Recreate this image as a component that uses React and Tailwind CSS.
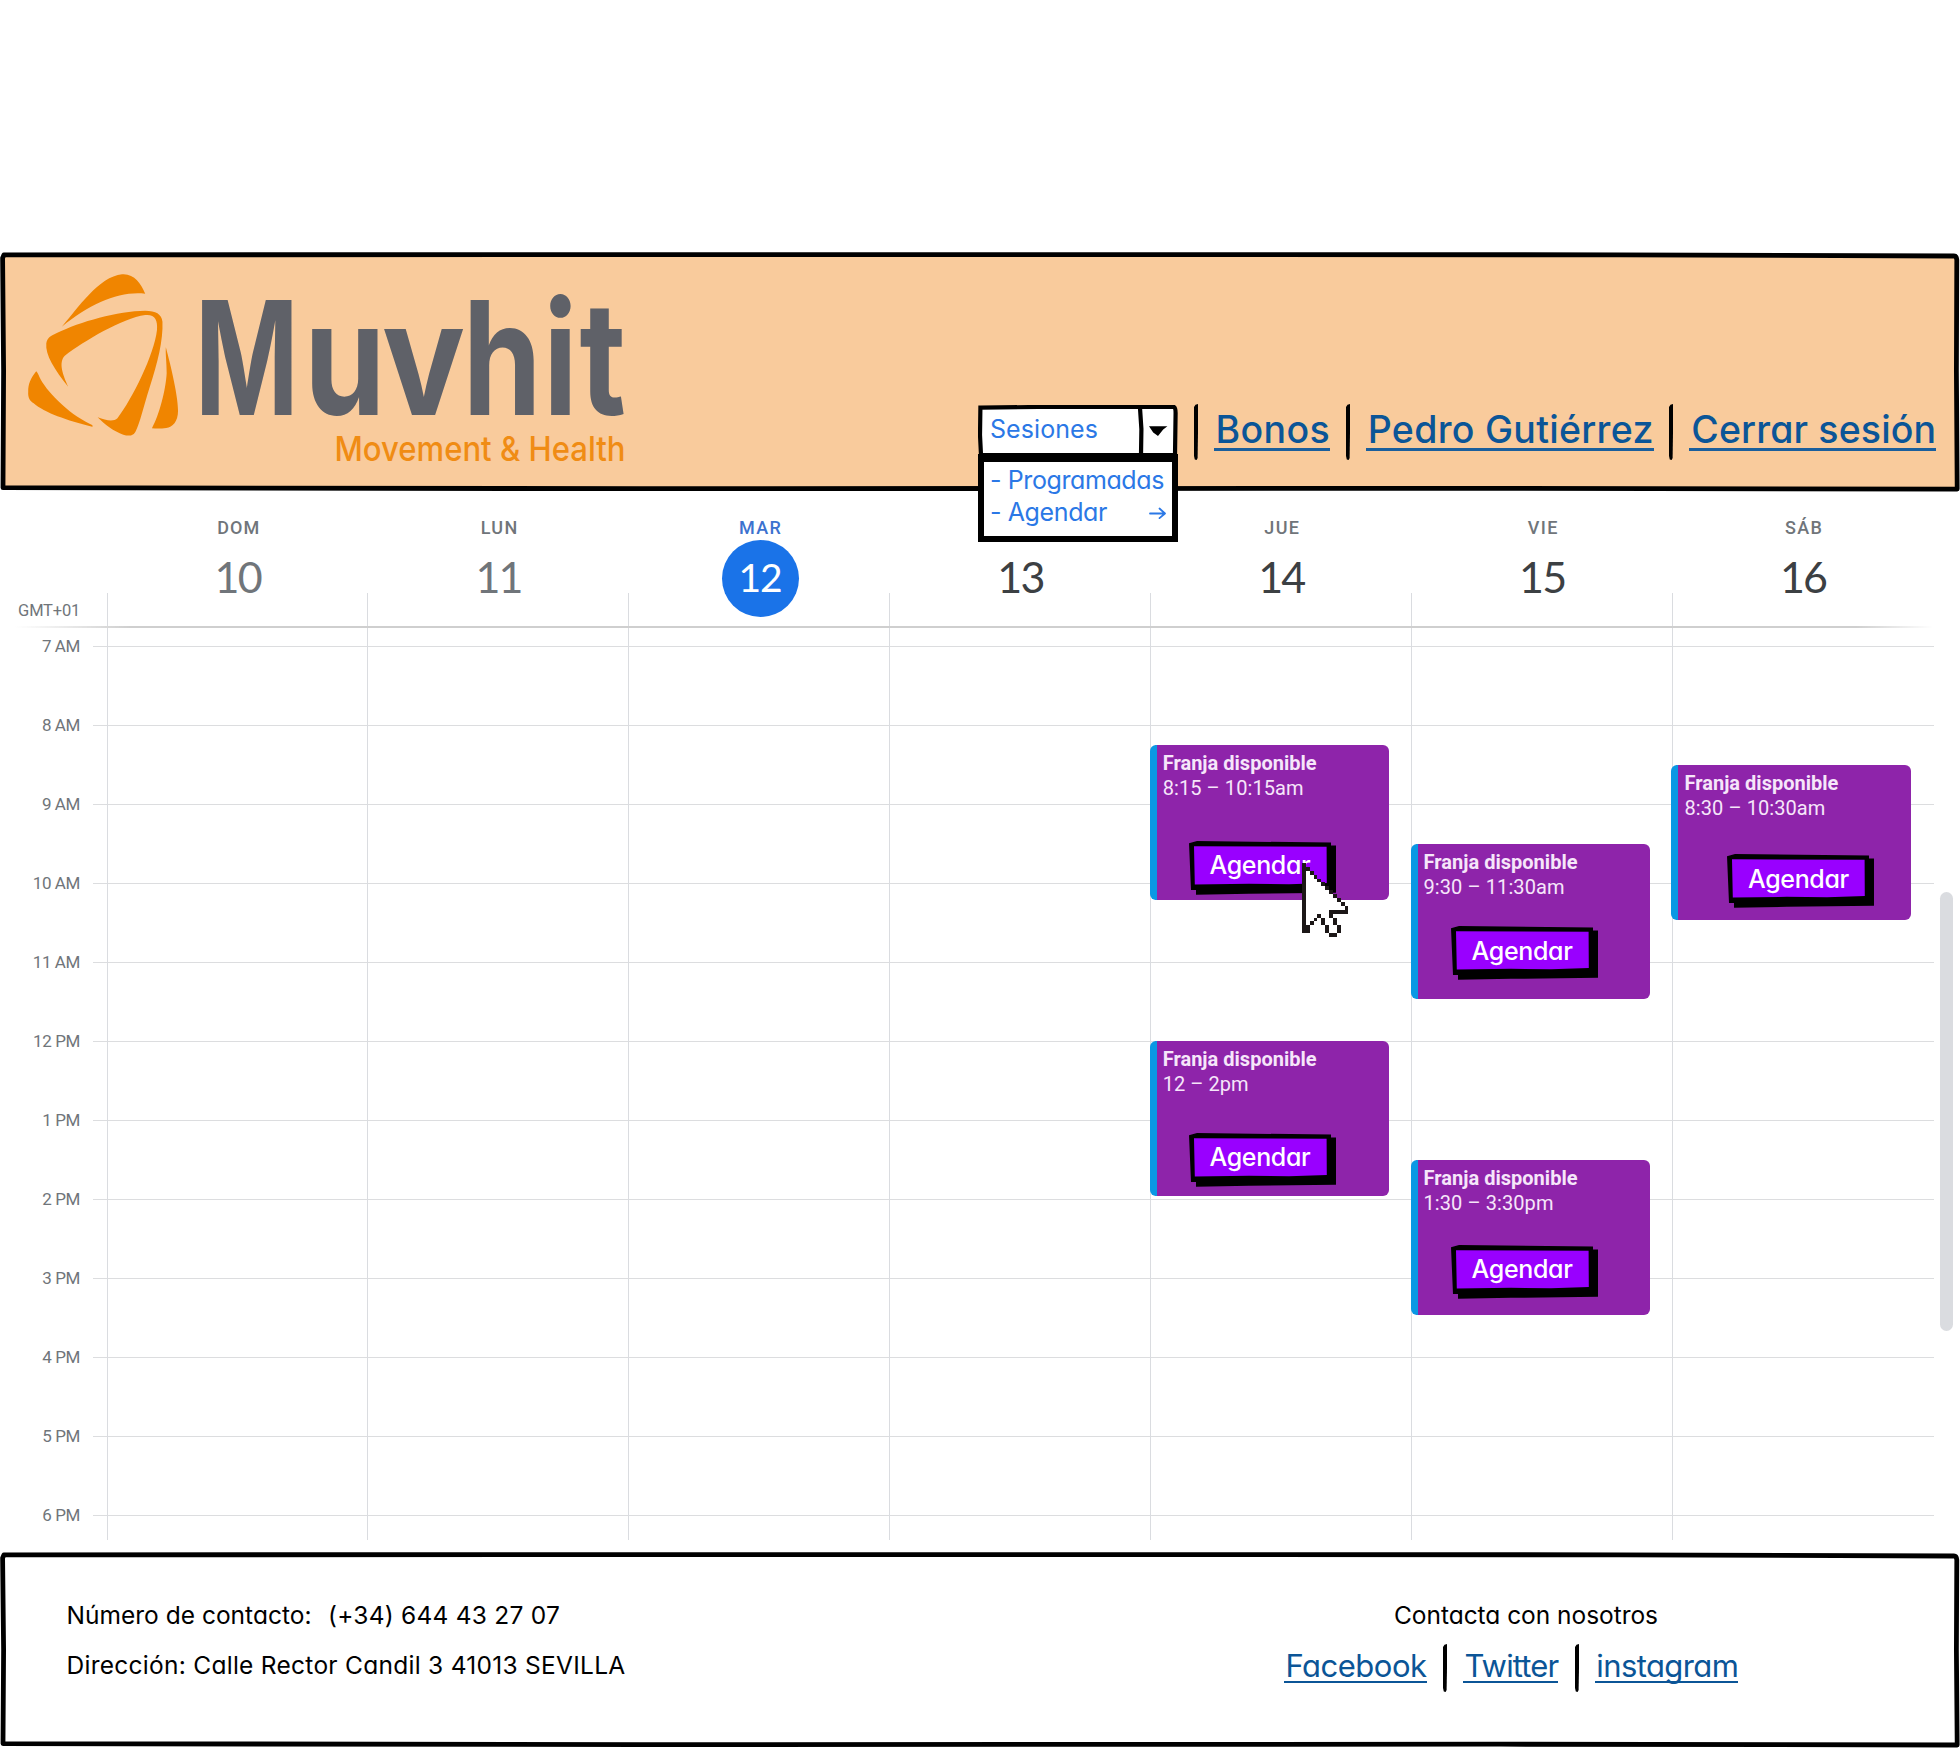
import React, { useLayoutEffect, useRef, useState } from 'react';

const HAND = "font-[Inter,'Noto_Sans',sans-serif] [font-feature-settings:'cv11'_1]";

/* Single line of text whose tracking is adjusted to fill a given width. */
function Fit({ w, className = '', children }) {
  const ref = useRef(null);
  const [ls, setLs] = useState(0);
  useLayoutEffect(() => {
    const el = ref.current;
    const natural = el.getBoundingClientRect().width;
    const n = el.textContent.length;
    setLs((w - natural) / n);
  }, [w]);
  return (
    <span className={'block shrink-0 whitespace-pre ' + className} style={{ width: w }}>
      <span ref={ref} className="inline-block" style={{ letterSpacing: ls }}>
        {children}
      </span>
    </span>
  );
}

function Frame({ h, b, fill }) {
  return (
    <svg className="absolute inset-0 overflow-visible" width="1960" height={h} viewBox={`0 0 1960 ${h}`} aria-hidden="true">
      <path
        d={`M4 2.8 L1200 2.6 L1620 2.8 L1954 4 Q1956.5 4 1956.8 8 L1956.4 ${h / 2} L1957.2 ${b + 0.4} L1500 ${b - 0.4} L640 ${b} L3 ${b - 1} L3.6 ${h / 2} L2.6 6 Z`}
        fill={fill}
        stroke="#000"
        strokeWidth="4.8"
        strokeLinejoin="round"
      />
    </svg>
  );
}

function Logo() {
  return (
    <svg className="absolute left-0 top-0" width="632" height="238" viewBox="0 252 632 238" aria-label="Muvhit">
      <g transform="translate(0 240) scale(0.42088 0.33333)" fill="#f08500">
        <path d="M147 260C185 205 235 110 290 103C318 100 335 130 345 161C285 152 215 190 147 260Z" />
        <path
          fillRule="evenodd"
          d="M162 440C130 390 107 345 110 310C113 292 118 290 135 279C190 245 280 213 345 212C370 212 384 222 386 245C388 300 374 370 356 440C341 500 332 550 323 572C317 590 305 588 293 584C270 574 250 555 232 532C252 542 270 546 279 535C315 475 366 345 373 270C375 240 368 222 345 225C290 235 200 303 154 347C138 368 150 405 162 440Z"
        />
        <path d="M86 394C72 417 67 432 67 455C66 475 72 483 80 490C105 518 160 542 219 560C222 559 220 555 214 552C160 520 108 450 94 412C91 402 88 396 86 394Z" />
        <path d="M394 322C400 350 423 460 423 512C423 545 410 561 395 564C384 566 372 566 361 565C378 525 394 450 396 400C396 365 393 345 394 322Z" />
      </g>
      <g transform="scale(0.8 1)" fill="#5f6168" fontFamily="Inter, sans-serif" fontWeight="700" fontSize="158">
        <text y="414.7">
          <tspan x="243.5" textLength="130" lengthAdjust="spacingAndGlyphs">M</tspan>
          <tspan x="380" textLength="102" lengthAdjust="spacingAndGlyphs">u</tspan>
          <tspan x="477.5" textLength="104" lengthAdjust="spacingAndGlyphs">v</tspan>
          <tspan x="578.5">h</tspan>
          <tspan x="679">i</tspan>
          <tspan x="724.5">t</tspan>
        </text>
      </g>
      <text
        x="334.5"
        y="460.8"
        fill="#f08c14"
        fontFamily="Inter, sans-serif"
        fontWeight="500"
        fontSize="34.5"
        textLength="291"
        lengthAdjust="spacingAndGlyphs"
      >
        Movement &amp; Health
      </text>
    </svg>
  );
}

function Bar({ h, className = '' }) {
  return (
    <svg className={'shrink-0 ' + className} width="4" height={h} viewBox={`0 0 4 ${h}`} aria-hidden="true">
      <path d={`M0 3 L1.5 0.8 L4 0 L4 ${h * 0.5} L3.6 ${h - 2} L2.6 ${h} L0.8 ${h - 0.6} L0 ${h - 4} Z`} fill="#000" />
    </svg>
  );
}

function NavLink({ w, children }) {
  return (
    <a className="block h-[47px] shrink-0 border-b-[3px] border-[#1b5f9c] pl-[2px] text-[37.5px] font-medium leading-[51px] text-[#0b5597]">
      <Fit w={w - 3}>{children}</Fit>
    </a>
  );
}

function SelectMenu() {
  return (
    <div className="relative h-[52px] w-[200px] shrink-0">
      <svg className="absolute left-0 top-px" width="200" height="52" viewBox="0 0 200 52" aria-hidden="true">
        <path d="M2.4 2.6 L60 2 L196 2 Q197.6 3 197.6 8 L197 50 L3 50 L2 30 Z" fill="#fff" stroke="#000" strokeWidth="4.2" />
        <path d="M162 3 L163.4 24 L163 50" fill="none" stroke="#000" strokeWidth="4.2" />
        <path d="M171 21.2 L189.4 21.2 L185.2 24.5 L180 31 L175.2 27.5 Z" fill="#000" />
      </svg>
      <div className="relative pl-[12px] text-[25px] leading-[51px] text-[#2b78e6]">
        <Fit w={108}>Sesiones</Fit>
      </div>
      <div className="absolute left-0 top-[50px] z-20 h-[88px] w-[200px] border-x-6 border-b-6 border-t-8 border-black bg-white pl-[6px] pt-[2px] text-[25px] leading-[32px] text-[#2b78e6]">
        <Fit w={174}>- Programadas</Fit>
        <div className="flex items-center">
          <Fit w={117}>- Agendar</Fit>
          <svg className="ml-[42px] shrink-0" width="17" height="14" viewBox="0 0 17 14" fill="none" stroke="#2b78e6" strokeWidth="1.8" strokeLinecap="round" strokeLinejoin="round">
            <path d="M1 8.5H16M10.5 3.5L16 8.5L10.5 13.1" />
          </svg>
        </div>
      </div>
    </div>
  );
}

function Header() {
  return (
    <header className="relative mt-[252px] h-[238px] w-full">
      <Frame h={238} b={236.7} fill="#f9cb9c" />
      <Logo />
      <nav className={'relative flex items-start gap-[15.8px] pl-[978px] pt-[152px] ' + HAND}>
        <SelectMenu />
        <Bar h={56} />
        <NavLink w={117.5}>Bonos</NavLink>
        <Bar h={56} />
        <NavLink w={289}>Pedro Gutiérrez</NavLink>
        <Bar h={56} />
        <NavLink w={248}>Cerrar sesión</NavLink>
      </nav>
    </header>
  );
}

function AgendarButton({ className }) {
  return (
    <button className={'absolute h-[54px] w-[147px] text-left ' + className}>
      <svg className="absolute inset-0" width="147" height="54" viewBox="0 0 147 54" aria-hidden="true">
        <path d="M0 2.2L8 0L142 1.6V4.6H147V51.8L60 52.8L7 53.8V49H2Z" fill="#000" />
        <path d="M5 5.2L137.6 5.8L137.8 42L100 43.2L60 42.8L5.8 43.6Z" fill="#9900ff" />
      </svg>
      <div className={'relative -top-[2px] pl-[20.5px] text-[25px] font-medium leading-[49px] text-white ' + HAND}>
        <Fit w={101}>Agendar</Fit>
      </div>
    </button>
  );
}

const CURSOR = [
  'X',
  'XX',
  'X.X',
  'X..X',
  'X...X',
  'X....X',
  'X.....X',
  'X......X',
  'X.......X',
  'X........X',
  'X.........X',
  'X..........X',
  'X......XXXXX',
  'X...X..X',
  'X..X X..X',
  'X.X  X..X',
  'XX    X..X',
  'XX    X..X',
  '       XX',
];

function Cursor() {
  return (
    <svg className="absolute left-[152px] top-[118px] z-10" width="46.4" height="74" viewBox="0 0 12 19" preserveAspectRatio="none" shapeRendering="crispEdges" aria-hidden="true">
      {CURSOR.flatMap((row, y) =>
        [...row].map((c, x) =>
          c === ' ' ? null : <rect key={`${x}-${y}`} x={x} y={y} width="1" height="1" fill={c === 'X' ? '#1c1717' : '#fff'} />
        )
      )}
    </svg>
  );
}

function Slot({ className, time, tw, button, cursor }) {
  return (
    <article className={'absolute -left-[0.5px] z-10 h-[155px] w-[239.5px] ' + className}>
      <div className="h-full overflow-hidden rounded-[6px] border-l-[7px] border-[#0a98e4] bg-[#8e24aa] pl-[6px] pt-[6px] text-[20px] leading-[25px] text-[#f6e6fa]">
        <Fit w={154} className="font-bold">Franja disponible</Fit>
        <Fit w={tw}>{time}</Fit>
      </div>
      <AgendarButton className={button} />
      {cursor && <Cursor />}
    </article>
  );
}

const DAYS = [
  { d: 'DOM', n: '10', w: 43, past: true },
  { d: 'LUN', n: '11', w: 38, past: true },
  { d: 'MAR', n: '12', w: 43, today: true },
  { d: 'MIÉ', n: '13', w: 38 },
  { d: 'JUE', n: '14', w: 36 },
  { d: 'VIE', n: '15', w: 31 },
  { d: 'SÁB', n: '16', w: 38 },
];

const SLOTS = {
  JUE: [
    { className: 'top-[117px]', time: '8:15 – 10:15am', tw: 141, button: 'left-[39.3px] top-[95.5px]', cursor: true },
    { className: 'top-[413px]', time: '12 – 2pm', tw: 86, button: 'left-[39.3px] top-[91.5px]' },
  ],
  VIE: [
    { className: 'top-[215.5px]', time: '9:30 – 11:30am', tw: 141, button: 'left-[40.5px] top-[82.5px]' },
    { className: 'top-[531.5px]', time: '1:30 – 3:30pm', tw: 130, button: 'left-[40.5px] top-[85px]' },
  ],
  'SÁB': [{ className: 'top-[136.5px]', time: '8:30 – 10:30am', tw: 141, button: 'left-[56px] top-[89.5px]' }],
};

const HOURS = ['7 AM', '8 AM', '9 AM', '10 AM', '11 AM', '12 PM', '1 PM', '2 PM', '3 PM', '4 PM', '5 PM', '6 PM'];

function Calendar() {
  return (
    <main className="relative h-[1062px] w-full font-[Roboto,sans-serif]">
      <div className="flex h-[136px]">
        <div className="flex w-[106.6px] shrink-0 items-end justify-end pb-[5.5px] pr-[26.5px] text-[16.5px] leading-[20px] text-[#70757a]">
          <Fit w={62}>GMT+01</Fit>
        </div>
        {DAYS.map((day) => (
          <div key={day.d} className="relative flex w-[260.9px] shrink-0 flex-col items-center pl-[3.4px] pt-[27px]">
            <span className="absolute bottom-0 left-0 h-[33px] w-px bg-[#dadce0]" />
            <Fit w={day.w} className={'text-[18px] font-medium leading-[22px] ' + (day.today ? 'text-[#3c72cf]' : 'text-[#70757a]')}>
              {day.d}
            </Fit>
            {day.today ? (
              <div className="mt-[1px] flex size-[77px] items-center justify-center rounded-full bg-[#1a73e8] font-[Lato,sans-serif] text-[39px] leading-none tracking-[-1px] text-white">
                <span className="relative -left-[0.5px] -top-[1.5px]">{day.n}</span>
              </div>
            ) : (
              <div className={'mt-[11px] pr-[2px] font-[Lato,sans-serif] text-[43px] leading-[54px] tracking-[-1.8px] ' + (day.past ? 'text-[#70757a]' : 'text-[#3c4043]')}>
                {day.n}
              </div>
            )}
          </div>
        ))}
      </div>
      <div className="ml-[15px] h-[2px] w-[1918px] bg-linear-to-r from-transparent via-[#cfcfcf] via-6% to-[#cfcfcf] [mask-image:linear-gradient(to_right,#000_96%,transparent)]" />
      <div className="relative h-[912px] overflow-hidden pt-[7.4px]">
        {HOURS.map((h) => (
          <div key={h} className="flex h-[78.98px] items-start">
            <div className="w-[80px] text-right text-[17px] leading-[22px] tracking-[-0.4px] text-[#70757a]">{h}</div>
            <div className="ml-[13px] mt-[11px] h-px w-[1840.5px] bg-[#dcdddf]" />
          </div>
        ))}
        <div className="absolute inset-y-0 left-[106.6px] flex">
          {DAYS.map((day) => (
            <div key={day.d} className="relative w-[260.9px]">
              <span className="absolute inset-y-0 left-0 w-px bg-[#dadce0]" />
              {(SLOTS[day.d] || []).map((s) => (
                <Slot key={s.time} {...s} />
              ))}
            </div>
          ))}
        </div>
      </div>
      <div className="absolute left-[1940.4px] top-[402px] h-[439px] w-[13px] rounded-full bg-[#dadce0]" />
    </main>
  );
}

function FooterLink({ w, children }) {
  return (
    <a className="block h-[39px] shrink-0 border-b-2 border-[#0b5597] pl-[1.5px] text-[31px] leading-[43px] text-[#0b5597]">
      <Fit w={w - 2}>{children}</Fit>
    </a>
  );
}

function Footer() {
  return (
    <footer className={'relative h-[196px] w-full ' + HAND}>
      <Frame h={196} b={192.6} fill="#fff" />
      <div className="relative flex text-[24.5px] leading-[50px] text-black">
        <div className="w-[1284px] shrink-0 pl-[66.5px] pt-[38px]">
          <div className="flex">
            <Fit w={245}>Número de contacto:</Fit>
            <Fit w={232} className="ml-[16.5px]">(+34) 644 43 27 07</Fit>
          </div>
          <Fit w={559}>Dirección: Calle Rector Candil 3 41013 SEVILLA</Fit>
        </div>
        <div className="w-[460px] shrink-0 pt-[38px]">
          <Fit w={264} className="ml-[110px]">Contacta con nosotros</Fit>
          <div className="mt-[4px] flex gap-[16.2px]">
            <FooterLink w={143}>Facebook</FooterLink>
            <Bar h={48} />
            <FooterLink w={96}>Twitter</FooterLink>
            <Bar h={48} />
            <FooterLink w={144}>instagram</FooterLink>
          </div>
        </div>
      </div>
    </footer>
  );
}

export default function App() {
  return (
    <div className="flow-root h-[1748px] w-[1960px] overflow-hidden bg-white">
      <Header />
      <Calendar />
      <Footer />
    </div>
  );
}
